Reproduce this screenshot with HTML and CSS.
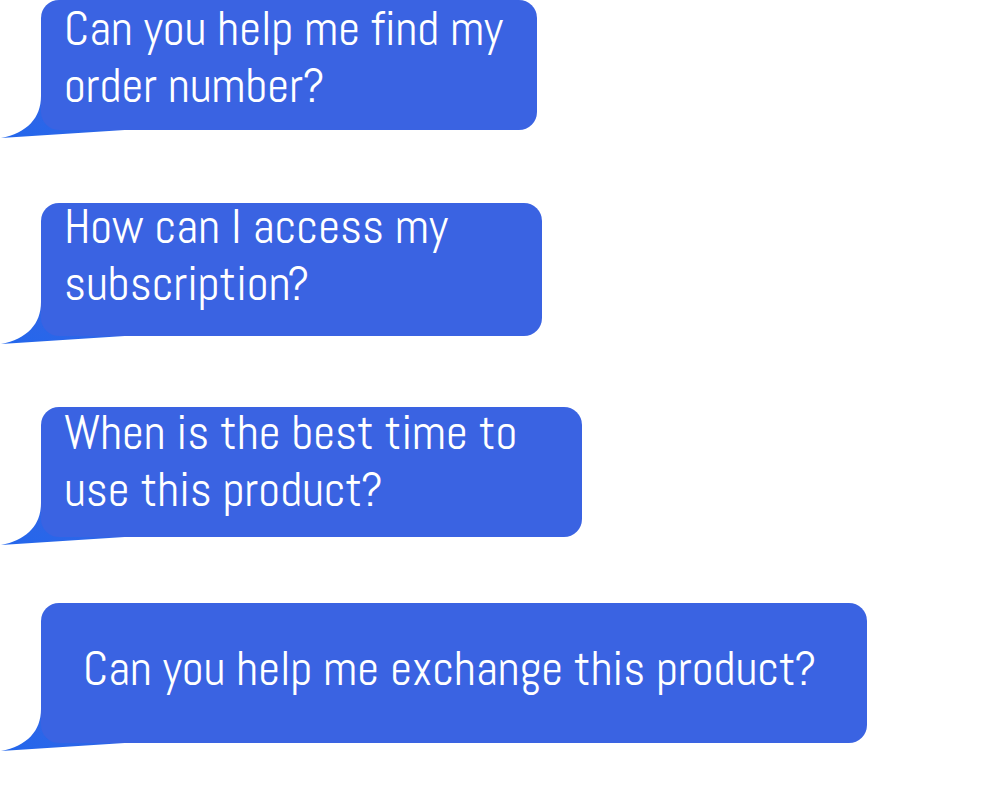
FILE: index.html
```html
<!DOCTYPE html>
<html>
<head>
    <title>Chat questions</title>
    <link rel="stylesheet" href="styles.css">
</head>
<body>
    <div class="chat">
        <div class="bubble bubble-order">
            <svg class="tail" width="140" height="50" viewBox="0 0 140 50">
                <defs>
                    <linearGradient id="tailFill" x1="0" y1="1" x2="1" y2="0">
                        <stop offset="0" stop-color="#2367ec"/>
                        <stop offset="1" stop-color="#3a63e2"/>
                    </linearGradient>
                </defs>
                <path d="M41 0 V6 C41 28 27 43 1 48 L140 39 V0 Z" fill="url(#tailFill)"/>
            </svg>
            <p class="text">Can you help me find my<br>order number?</p>
        </div>

        <div class="bubble bubble-access">
            <svg class="tail" width="140" height="50" viewBox="0 0 140 50">
                <path d="M41 0 V6 C41 28 27 43 1 48 L140 39 V0 Z" fill="url(#tailFill)"/>
            </svg>
            <p class="text">How can I access my<br>subscription?</p>
        </div>

        <div class="bubble bubble-time">
            <svg class="tail" width="140" height="50" viewBox="0 0 140 50">
                <path d="M41 0 V6 C41 28 27 43 1 48 L140 39 V0 Z" fill="url(#tailFill)"/>
            </svg>
            <p class="text">When is the best time to<br>use this product?</p>
        </div>

        <div class="bubble bubble-exchange">
            <svg class="tail" width="140" height="50" viewBox="0 0 140 50">
                <path d="M41 0 V6 C41 28 27 43 1 48 L140 39 V0 Z" fill="url(#tailFill)"/>
            </svg>
            <p class="text">Can you help me exchange this product?</p>
        </div>
    </div>
</body>
</html>
```
FILE: styles.css
```css
body {
    margin: 0;
    background: #ffffff;
    font-family: "Abel", "Roboto Condensed", "Roboto", "Liberation Sans", sans-serif;
}
.chat {
    position: relative;
    z-index: 0;
    display: flex;
    flex-direction: column;
    align-items: flex-start;
    padding-left: 41px;
    padding-bottom: 40px;
}
.bubble {
    position: relative;
    display: flex;
    flex-direction: column;
    box-sizing: border-box;
    background: #3a63e2;
    border-radius: 18px;
    color: #ffffff;
    padding-left: 23px;
}
.tail {
    position: absolute;
    left: -41px;
    bottom: -10px;
    z-index: -1;
}
.text {
    margin: 0;
    font-size: 48px;
    line-height: 57px;
    white-space: nowrap;
}
.bubble-order {
    width: 496px;
    height: 130px;
}
.bubble-access {
    width: 501px;
    height: 133px;
    margin-top: 73px;
}
.bubble-access .text {
    margin-top: -5px;
}
.bubble-time {
    width: 541px;
    height: 130px;
    margin-top: 71px;
}
.bubble-time .text {
    margin-top: -3px;
}
.bubble-exchange {
    width: 826px;
    height: 140px;
    margin-top: 66px;
    padding-left: 42px;
    padding-top: 37px;
}
```
